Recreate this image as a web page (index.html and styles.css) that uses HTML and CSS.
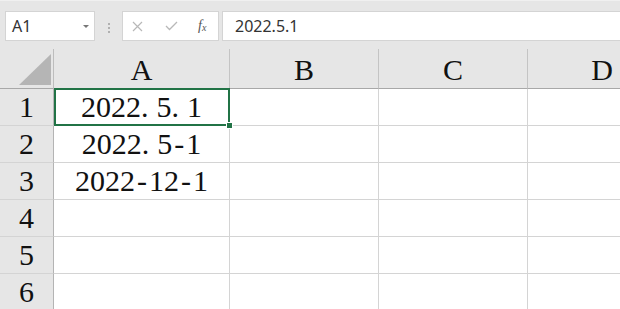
FILE: index.html
```html
<!DOCTYPE html>
<html lang="zh">
<head>
    <meta charset="UTF-8">
    <meta name="viewport" content="width=device-width, initial-scale=1.0">
    <title>Sheet</title>
    <link rel="stylesheet" href="styles.css">
</head>
<body>

    <div class="toolbar">
        <div class="name-box">
            <span>A1</span>
            <span class="caret"></span>
        </div>
        <div class="grip"><i></i><i></i><i></i></div>
        <div class="fx-buttons">
            <svg class="btn" width="11" height="11" viewBox="0 0 11 11">
                <path d="M1 1L10 10M10 1L1 10" stroke="#b8b8b8" stroke-width="1.2" fill="none"/>
            </svg>
            <svg class="btn" width="13" height="10" viewBox="0 0 13 10">
                <path d="M1 5L4.5 8.5L12 1" stroke="#b8b8b8" stroke-width="1.3" fill="none"/>
            </svg>
            <span class="fx">f<sub>x</sub></span>
        </div>
        <div class="formula">2022.5.1</div>
    </div>

    <div class="sheet">
        <div class="corner"><div class="tri"></div></div>
        <div class="col-head">A</div>
        <div class="col-head">B</div>
        <div class="col-head">C</div>
        <div class="col-head">D</div>

        <div class="row-head">1</div>
        <div class="cell active">2022<span class="dot">.</span>5<span class="dot">.</span>1</div>
        <div class="cell"></div>
        <div class="cell"></div>
        <div class="cell"></div>

        <div class="row-head">2</div>
        <div class="cell">2022<span class="dot">.</span>5<span class="dash">-</span>1</div>
        <div class="cell"></div>
        <div class="cell"></div>
        <div class="cell"></div>

        <div class="row-head">3</div>
        <div class="cell">2022<span class="dash">-</span>12<span class="dash">-</span>1</div>
        <div class="cell"></div>
        <div class="cell"></div>
        <div class="cell"></div>

        <div class="row-head">4</div>
        <div class="cell"></div>
        <div class="cell"></div>
        <div class="cell"></div>
        <div class="cell"></div>

        <div class="row-head">5</div>
        <div class="cell"></div>
        <div class="cell"></div>
        <div class="cell"></div>
        <div class="cell"></div>

        <div class="row-head">6</div>
        <div class="cell"></div>
        <div class="cell"></div>
        <div class="cell"></div>
        <div class="cell"></div>
    </div>

</body>
</html>
```

FILE: styles.css
```css
body {
    margin: 0;
    width: 620px;
    height: 309px;
    overflow: hidden;
    background-color: #fff;
    font-family: "Liberation Serif", "Noto Sans CJK SC", serif;
}

/* formula bar */
.toolbar {
    display: flex;
    align-items: flex-start;
    height: 49px;
    box-sizing: border-box;
    padding: 10px 0 0 5px;
    background-color: #e6e6e6;
    border-top: 1px solid #f0f0f0;
    font-family: "Noto Sans", "Liberation Sans", sans-serif;
    font-size: 16px;
    color: #333;
}

.name-box {
    display: flex;
    align-items: center;
    justify-content: space-between;
    width: 90px;
    height: 30px;
    box-sizing: border-box;
    padding: 0 5px 0 6px;
    background-color: #fff;
    border: 1px solid #d4d4d4;
}

.caret {
    width: 0;
    height: 0;
    border-left: 3px solid transparent;
    border-right: 3px solid transparent;
    border-top: 3px solid #777;
}

.grip {
    display: flex;
    flex-direction: column;
    align-items: center;
    gap: 2px;
    width: 27px;
    padding-top: 12px;
}

.grip i {
    width: 2px;
    height: 2px;
    background-color: #b0b0b0;
}

.fx-buttons {
    display: flex;
    align-items: center;
    gap: 22px;
    width: 97px;
    height: 30px;
    box-sizing: border-box;
    padding: 0 0 0 9px;
    background-color: #fff;
    border: 1px solid #d4d4d4;
}

.fx {
    color: #555;
    font-family: "Liberation Serif", serif;
    font-style: italic;
    font-size: 14px;
    margin-left: -2px;
}

.fx sub {
    font-size: 10px;
    vertical-align: -1px;
}

.formula {
    flex: 1;
    height: 30px;
    box-sizing: border-box;
    margin-left: 3px;
    padding: 0 12px;
    line-height: 28px;
    background-color: #fff;
    border: 1px solid #d4d4d4;
    border-right: none;
}

/* grid */
.sheet {
    display: grid;
    grid-template-columns: 54px 176px 149px 149px 149px;
    grid-template-rows: 40px repeat(6, 37px);
    width: 620px;
    height: 260px;
    overflow: hidden;
    font-size: 30px;
    color: #111;
}

.corner,
.col-head,
.row-head {
    background-color: #e6e6e6;
}

.corner {
    display: flex;
    align-items: flex-end;
    justify-content: flex-end;
    padding: 0 2px 3px 0;
    border-right: 1px solid #bdbdbd;
    border-bottom: 1px solid #a8a8a8;
}

.tri {
    width: 0;
    height: 0;
    border-left: 32px solid transparent;
    border-bottom: 31px solid #b5b5b5;
}

.col-head {
    display: flex;
    align-items: flex-end;
    justify-content: center;
    padding-bottom: 2px;
    border-right: 1px solid #c4c4c4;
    border-bottom: 1px solid #a8a8a8;
    line-height: 32px;
}

.row-head {
    display: flex;
    align-items: center;
    justify-content: center;
    border-right: 1px solid #b4b4b4;
    border-bottom: 1px solid #d4d4d4;
}

.cell {
    display: flex;
    align-items: center;
    justify-content: center;
    border-right: 1px solid #d4d4d4;
    border-bottom: 1px solid #d4d4d4;
    white-space: nowrap;
}

.dot {
    padding-right: 8px;
}

.dash {
    padding: 0 2px;
}

.cell.active {
    position: relative;
}

.cell.active::before {
    content: "";
    position: absolute;
    left: 0;
    top: -1px;
    right: -1px;
    bottom: -1px;
    border: 2px solid #217346;
}

.cell.active::after {
    content: "";
    position: absolute;
    right: -4px;
    bottom: -4px;
    width: 5px;
    height: 5px;
    background-color: #217346;
    border: 1px solid #fff;
}
```
